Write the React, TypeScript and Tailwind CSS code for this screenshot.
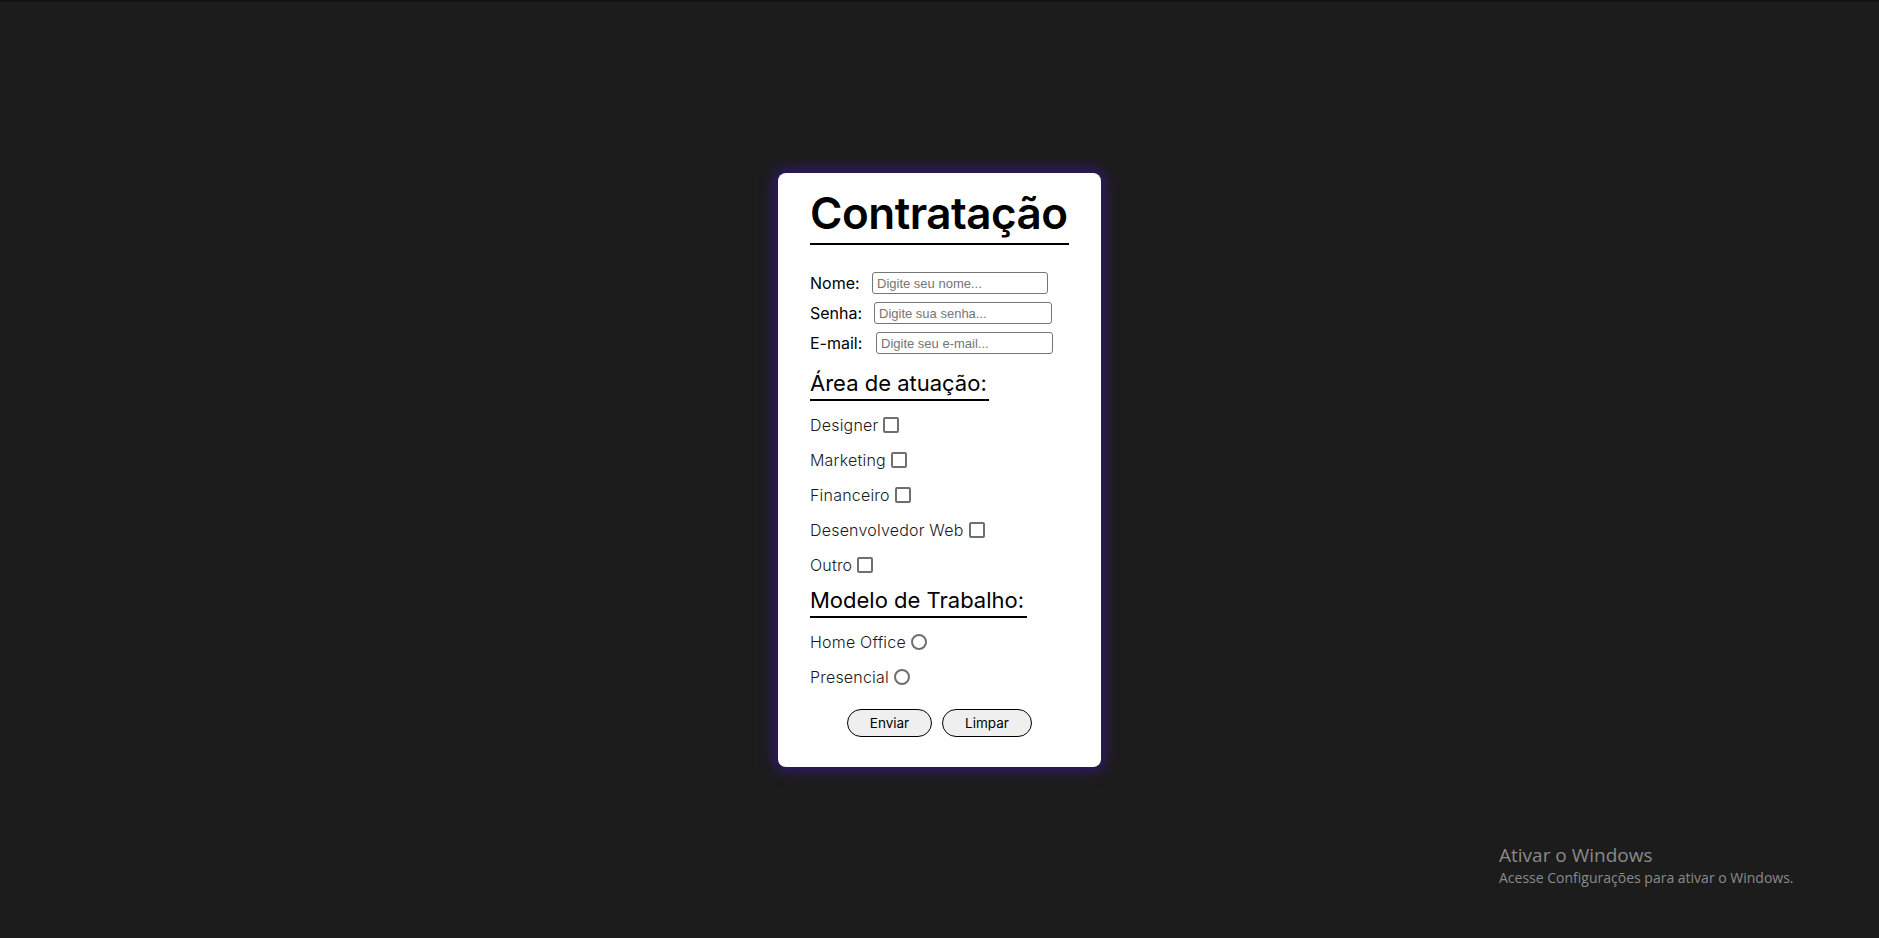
import React from "react";

const areas = ["Designer", "Marketing", "Financeiro", "Desenvolvedor Web", "Outro"];
const modelos = ["Home Office", "Presencial"];

export default function App() {
  return (
    <div className="relative min-h-screen bg-[#1c1c1c] flex flex-col font-['Inter',sans-serif]">
      <div className="h-[2px] bg-[#111118]" />
      <div className="flex-1 flex items-center justify-center">
        <div className="w-[323px] h-[594px] bg-white rounded-lg px-8 pt-[12px] shadow-[0_0_14px_4px_#301a6e]">
          <h1 className="text-[44px] leading-[56px] font-semibold tracking-[-0.5px] text-black border-b-2 border-black pb-[2px]">
            Contratação
          </h1>

          <div className="mt-[27px] flex flex-col gap-[8px]">
            <div className="flex items-center h-[22px]">
              <label className="text-[16px] text-black w-[62px]">Nome:</label>
              <input
                placeholder="Digite seu nome..."
                className="w-[176px] h-[22px] border border-[#767676] rounded-[3px] px-[4px] text-[13px] font-['Liberation_Sans',sans-serif] placeholder:text-[#757575] outline-none"
              />
            </div>
            <div className="flex items-center h-[22px]">
              <label className="text-[16px] text-black w-[64px]">Senha:</label>
              <input
                placeholder="Digite sua senha..."
                className="w-[178px] h-[22px] border border-[#767676] rounded-[3px] px-[4px] text-[13px] font-['Liberation_Sans',sans-serif] placeholder:text-[#757575] outline-none"
              />
            </div>
            <div className="flex items-center h-[22px]">
              <label className="text-[16px] text-black w-[66px]">E-mail:</label>
              <input
                placeholder="Digite seu e-mail..."
                className="w-[177px] h-[22px] border border-[#767676] rounded-[3px] px-[4px] text-[13px] font-['Liberation_Sans',sans-serif] placeholder:text-[#757575] outline-none"
              />
            </div>
          </div>

          <h2 className="mt-[14px] inline-block text-[22px] leading-[31px] text-black border-b-2 border-black pr-[2px]">
            Área de atuação:
          </h2>

          <div className="mt-[6px] flex flex-col">
            {areas.map((a) => (
              <div key={a} className="flex items-center h-[35px] gap-[5px]">
                <span className="text-[16px] font-light tracking-[0.2px] text-[#1a1a1a]">{a}</span>
                <span className="w-[16px] h-[16px] border-2 border-[#6f6f6f] rounded-[2px]" />
              </div>
            ))}
          </div>

          <h2 className="mt-[3px] inline-block text-[22px] leading-[31px] text-black border-b-2 border-black pr-[3px]">
            Modelo de Trabalho:
          </h2>

          <div className="mt-[6px] flex flex-col">
            {modelos.map((m) => (
              <div key={m} className="flex items-center h-[35px] gap-[5px]">
                <span className="text-[16px] font-light tracking-[0.2px] text-[#1a1a1a]">{m}</span>
                <span className="w-[16px] h-[16px] border-2 border-[#6f6f6f] rounded-full" />
              </div>
            ))}
          </div>

          <div className="mt-[15px] flex justify-center gap-[10px]">
            <button className="w-[85px] h-[28px] rounded-full border border-black bg-[#efefef] text-[13.5px] text-black">
              Enviar
            </button>
            <button className="w-[90px] h-[28px] rounded-full border border-black bg-[#efefef] text-[13.5px] text-black">
              Limpar
            </button>
          </div>
        </div>
      </div>

      <div className="absolute left-[1499px] top-[843px] font-['Open_Sans',sans-serif] text-[#8a8a8a]">
        <div className="text-[19px] leading-[25px]">Ativar o Windows</div>
        <div className="text-[14px] leading-[20px]">Acesse Configurações para ativar o Windows.</div>
      </div>
    </div>
  );
}
